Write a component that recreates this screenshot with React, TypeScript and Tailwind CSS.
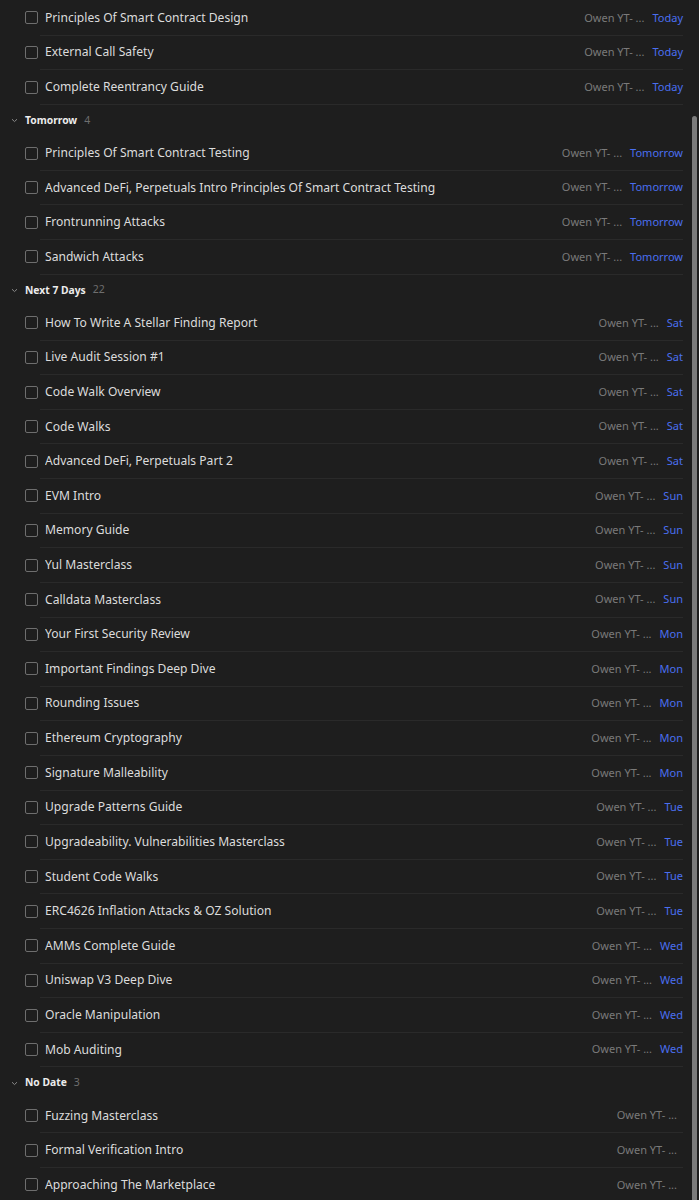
const groups = [
  {
    title: '',
    count: 0,
    items: [
      { name: 'Principles Of Smart Contract Design', date: 'Today' },
      { name: 'External Call Safety', date: 'Today' },
      { name: 'Complete Reentrancy Guide', date: 'Today' },
    ],
  },
  {
    title: 'Tomorrow',
    count: 4,
    items: [
      { name: 'Principles Of Smart Contract Testing', date: 'Tomorrow' },
      { name: 'Advanced DeFi, Perpetuals Intro Principles Of Smart Contract Testing', date: 'Tomorrow' },
      { name: 'Frontrunning Attacks', date: 'Tomorrow' },
      { name: 'Sandwich Attacks', date: 'Tomorrow' },
    ],
  },
  {
    title: 'Next 7 Days',
    count: 22,
    items: [
      { name: 'How To Write A Stellar Finding Report', date: 'Sat' },
      { name: 'Live Audit Session #1', date: 'Sat' },
      { name: 'Code Walk Overview', date: 'Sat' },
      { name: 'Code Walks', date: 'Sat' },
      { name: 'Advanced DeFi, Perpetuals Part 2', date: 'Sat' },
      { name: 'EVM Intro', date: 'Sun' },
      { name: 'Memory Guide', date: 'Sun' },
      { name: 'Yul Masterclass', date: 'Sun' },
      { name: 'Calldata Masterclass', date: 'Sun' },
      { name: 'Your First Security Review', date: 'Mon' },
      { name: 'Important Findings Deep Dive', date: 'Mon' },
      { name: 'Rounding Issues', date: 'Mon' },
      { name: 'Ethereum Cryptography', date: 'Mon' },
      { name: 'Signature Malleability', date: 'Mon' },
      { name: 'Upgrade Patterns Guide', date: 'Tue' },
      { name: 'Upgradeability. Vulnerabilities Masterclass', date: 'Tue' },
      { name: 'Student Code Walks', date: 'Tue' },
      { name: 'ERC4626 Inflation Attacks & OZ Solution', date: 'Tue' },
      { name: 'AMMs Complete Guide', date: 'Wed' },
      { name: 'Uniswap V3 Deep Dive', date: 'Wed' },
      { name: 'Oracle Manipulation', date: 'Wed' },
      { name: 'Mob Auditing', date: 'Wed' },
    ],
  },
  {
    title: 'No Date',
    count: 3,
    items: [
      { name: 'Fuzzing Masterclass', date: '' },
      { name: 'Formal Verification Intro', date: '' },
      { name: 'Approaching The Marketplace', date: '' },
    ],
  },
];

function Chevron() {
  return (
    <svg width="7" height="5" viewBox="0 0 7 5" className="text-[#8a8a8a]">
      <path d="M1 1.2 L3.5 3.6 L6 1.2" fill="none" stroke="currentColor" strokeWidth="1" />
    </svg>
  );
}

function TaskRow({ name, date }: { name: string; date: string }) {
  return (
    <div className="ml-[40px] mr-[16px] h-[34.62px] flex items-center border-b border-[#2a2a2a]">
      <div className="-ml-[15px] w-[13px] h-[13px] shrink-0 rounded-[2px] border border-[#6e6e6e]" />
      <span className="ml-[7px] flex-1 truncate text-[12.1px] text-[#dcdcdc]">{name}</span>
      <span className={`text-[11px] text-[#7a7a7a] ${date ? '' : 'mr-[6px]'}`}>Owen YT- ...</span>
      {date && <span className="ml-[8px] text-[11px] text-[#4a6ff0]">{date}</span>}
    </div>
  );
}

export default function App() {
  return (
    <div
      className="relative w-[699px] h-[1200px] overflow-hidden bg-[#1e1e1e] pt-[1px]"
      style={{ fontFamily: '"Noto Sans", "Open Sans", sans-serif' }}
    >
      {groups.map((g, gi) => (
        <div key={gi}>
          {g.title && (
            <div className="h-[31.4px] flex items-center pl-[11px]">
              <Chevron />
              <span className="ml-[7px] text-[10.3px] font-bold text-[#ececec]">{g.title}</span>
              <span className="ml-[7px] text-[10.5px] text-[#6e6e6e]">{g.count}</span>
            </div>
          )}
          {g.items.map((it, i) => (
            <TaskRow key={i} name={it.name} date={it.date} />
          ))}
        </div>
      ))}
      <div className="absolute right-[2px] top-[116px] w-[5px] h-[1100px] rounded-full bg-[#7c7c7c]" />
    </div>
  );
}
